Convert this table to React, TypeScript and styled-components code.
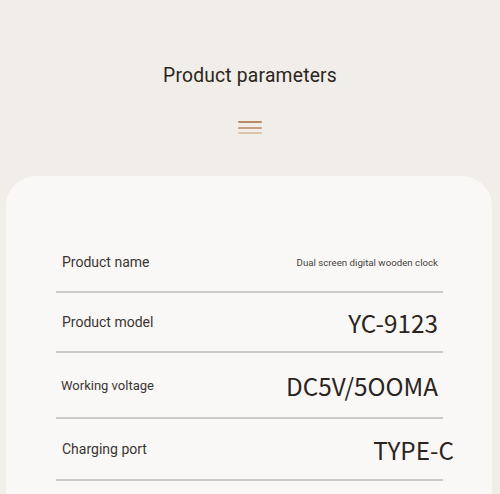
import React from 'react';
import styled, { createGlobalStyle } from 'styled-components';

const Global = createGlobalStyle`
  html, body {
    margin: 0;
    padding: 0;
    background: #f1eee9;
  }
  body {
    font-family: Roboto, 'Noto Sans', sans-serif;
  }
`;

const Page = styled.div`
  width: 500px;
  height: 494px;
  overflow: hidden;
  display: flex;
  flex-direction: column;
  align-items: center;
`;

const Title = styled.h2`
  margin: 64px 0 0;
  font-size: 19.3px;
  font-weight: 400;
  letter-spacing: 0.2px;
  color: #2b2520;
  line-height: 24px;
`;

const Menu = styled.div`
  margin-top: 33px;
  width: 24px;
  display: flex;
  flex-direction: column;
  gap: 3.5px;
`;

const Bar = styled.span<{ $color: string }>`
  display: block;
  height: 2px;
  border-radius: 1px;
  background: ${({ $color }) => $color};
`;

const Card = styled.div`
  align-self: flex-start;
  margin: 42px 0 0 6px;
  width: 486px;
  flex: 1;
  background: #faf8f7;
  border-radius: 30px 30px 0 0;
  padding: 57px 0 0 50px;
  box-sizing: border-box;
`;

const List = styled.div`
  width: 387px;
  display: flex;
  flex-direction: column;
`;

const Row = styled.div<{ $h: number }>`
  height: ${({ $h }) => `${$h}px`};
  display: flex;
  align-items: center;
  justify-content: space-between;
  padding: 0 5px 0 6px;
  border-bottom: 2px solid #cdcac7;
  box-sizing: border-box;
`;

const Label = styled.span<{ $size?: number; $dx?: number }>`
  font-size: ${({ $size = 14 }) => `${$size}px`};
  color: #3a3532;
  margin-left: ${({ $dx = 0 }) => `${$dx}px`};
`;

const Value = styled.span<{ $small?: boolean; $dx?: number }>`
  font-family: ${({ $small }) => ($small ? "Roboto, 'Noto Sans', sans-serif" : "'Noto Sans CJK SC', 'Noto Sans', sans-serif")};
  font-size: ${({ $small }) => ($small ? '9.7px' : '24.3px')};
  color: ${({ $small }) => ($small ? '#45403c' : '#2a2420')};
  margin-right: ${({ $dx = 0 }) => `${$dx}px`};
  white-space: nowrap;
`;

const rows = [
  { label: 'Product name', value: 'Dual screen digital wooden clock', small: true, h: 60 },
  { label: 'Product model', value: 'YC-9123', h: 60 },
  { label: 'Working voltage', value: 'DC5V/5OOMA', h: 66, labelSize: 13, labelDx: -1 },
  { label: 'Charging port', value: 'TYPE-C', h: 62, valueDx: -16 },
];

export default function App() {
  return (
    <Page>
      <Global />
      <Title>Product parameters</Title>
      <Menu>
        <Bar $color="#b98b6b" />
        <Bar $color="#c7a083" />
        <Bar $color="#dcc2ab" />
      </Menu>
      <Card>
        <List>
          {rows.map((r) => (
            <Row key={r.label} $h={r.h}>
              <Label $size={r.labelSize} $dx={r.labelDx}>{r.label}</Label>
              <Value $small={r.small} $dx={r.valueDx}>{r.value}</Value>
            </Row>
          ))}
        </List>
      </Card>
    </Page>
  );
}
